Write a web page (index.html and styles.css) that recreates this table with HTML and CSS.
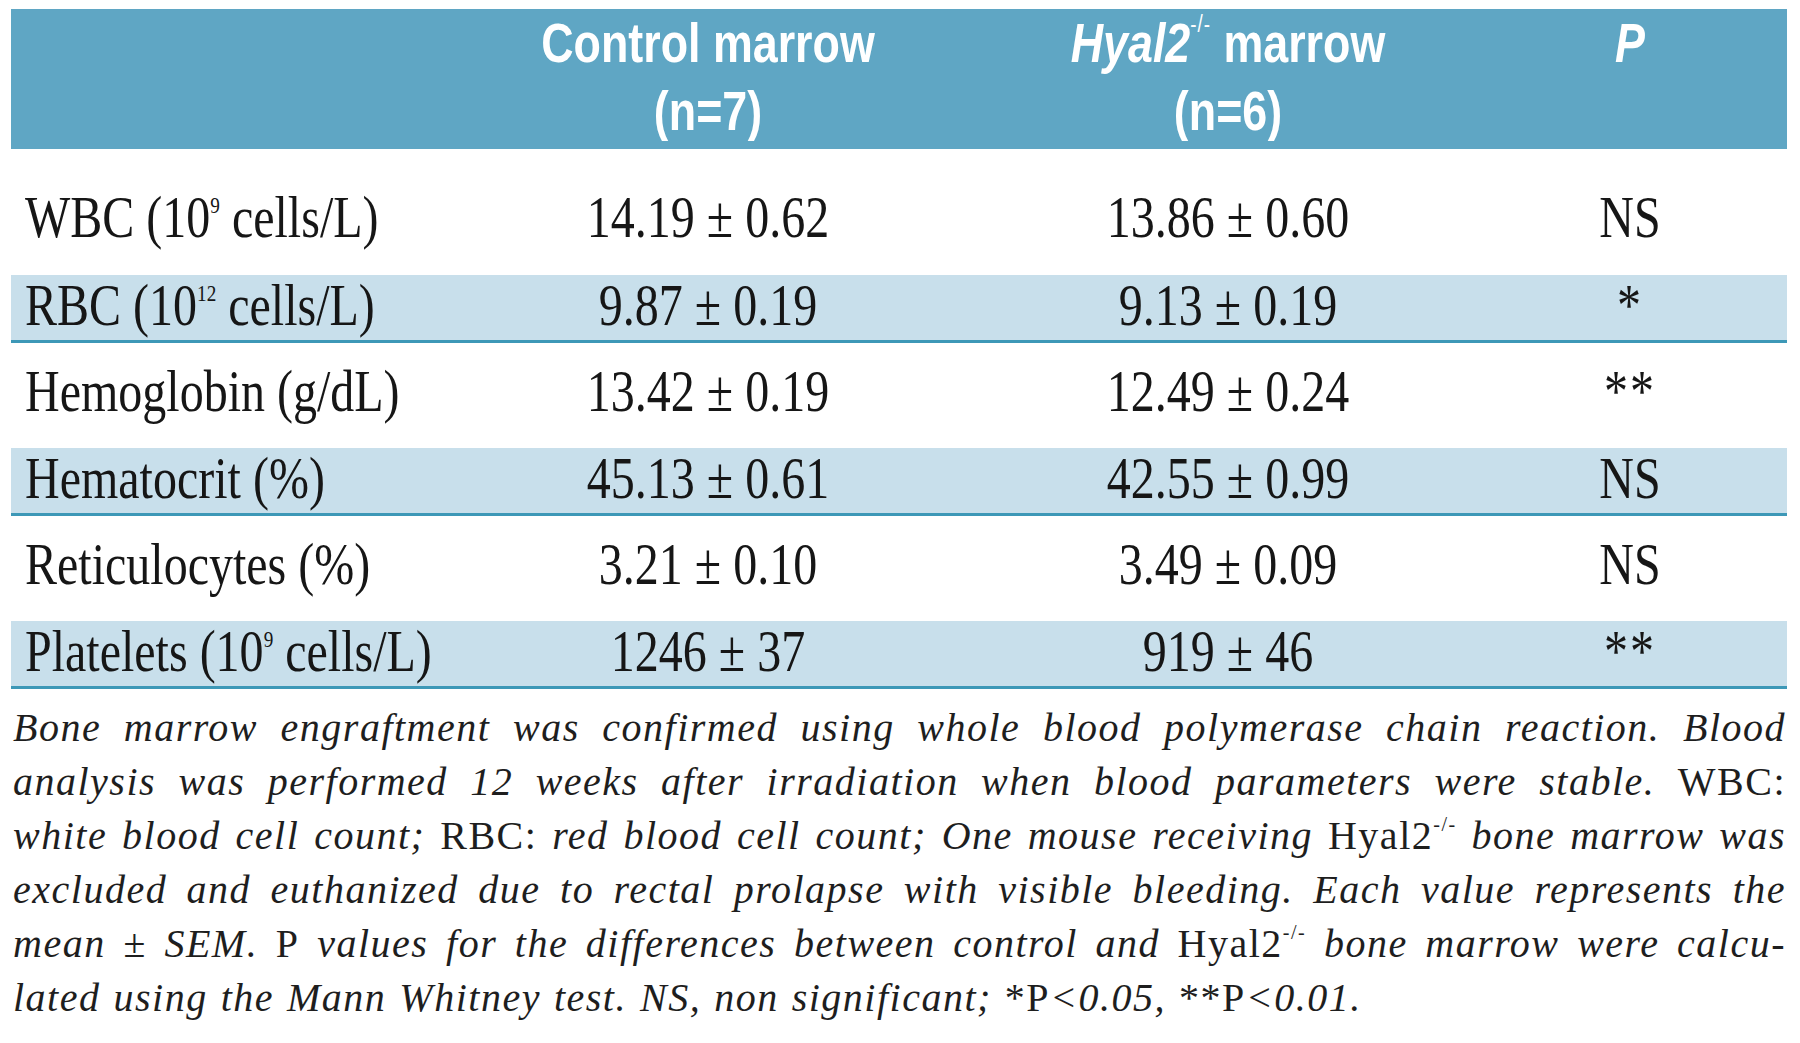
FILE: index.html
```html
<!DOCTYPE html>
<html lang="en">
<head>
<meta charset="utf-8">
<title>Hematological parameters</title>
<link rel="stylesheet" href="styles.css">
</head>
<body>
<table class="data">
  <colgroup>
    <col class="c-label"><col class="c-val"><col class="c-val"><col class="c-p">
  </colgroup>
  <thead>
    <tr class="hdr">
      <th class="label"></th>
      <th><span class="t">Control marrow<br>(n=7)</span></th>
      <th><span class="t"><i>Hyal2</i><span class="hsup">-/-</span> marrow<br>(n=6)</span></th>
      <th class="pcol"><span class="t"><i>P</i></span></th>
    </tr>
  </thead>
  <tbody>
    <tr class="first">
      <td class="label"><span class="t">WBC (10<span class="sup">9</span> cells/L)</span></td>
      <td><span class="t">14.19 ± 0.62</span></td>
      <td><span class="t">13.86 ± 0.60</span></td>
      <td class="pcol"><span class="t">NS</span></td>
    </tr>
    <tr class="band">
      <td class="label"><span class="t">RBC (10<span class="sup">12</span> cells/L)</span></td>
      <td><span class="t">9.87 ± 0.19</span></td>
      <td><span class="t">9.13 ± 0.19</span></td>
      <td class="pcol star"><span class="t">*</span></td>
    </tr>
    <tr class="plain">
      <td class="label"><span class="t">Hemoglobin (g/dL)</span></td>
      <td><span class="t">13.42 ± 0.19</span></td>
      <td><span class="t">12.49 ± 0.24</span></td>
      <td class="pcol star"><span class="t">**</span></td>
    </tr>
    <tr class="band">
      <td class="label"><span class="t">Hematocrit (%)</span></td>
      <td><span class="t">45.13 ± 0.61</span></td>
      <td><span class="t">42.55 ± 0.99</span></td>
      <td class="pcol"><span class="t">NS</span></td>
    </tr>
    <tr class="plain">
      <td class="label"><span class="t">Reticulocytes (%)</span></td>
      <td><span class="t">3.21 ± 0.10</span></td>
      <td><span class="t">3.49 ± 0.09</span></td>
      <td class="pcol"><span class="t">NS</span></td>
    </tr>
    <tr class="band">
      <td class="label"><span class="t">Platelets (10<span class="sup">9</span> cells/L)</span></td>
      <td><span class="t">1246 ± 37</span></td>
      <td><span class="t">919 ± 46</span></td>
      <td class="pcol star"><span class="t">**</span></td>
    </tr>
  </tbody>
</table>
<div class="note">
  <div class="ln">Bone marrow engraftment was confirmed using whole blood polymerase chain reaction. Blood</div>
  <div class="ln">analysis was performed 12 weeks after irradiation when blood parameters were stable. <span class="rm">WBC:</span></div>
  <div class="ln">white blood cell count; <span class="rm">RBC:</span> red blood cell count; One mouse receiving <span class="rm">Hyal2<span class="nsup">-/-</span></span> bone marrow was</div>
  <div class="ln">excluded and euthanized due to rectal prolapse with visible bleeding. Each value represents the</div>
  <div class="ln">mean ± SEM. <span class="rm">P</span> values for the differences between control and <span class="rm">Hyal2<span class="nsup">-/-</span></span> bone marrow were calcu-</div>
  <div class="ln last">lated using the Mann Whitney test. NS, non significant; <span class="rm">*P</span>&lt;0.05, <span class="rm">**P</span>&lt;0.01.</div>
</div>
</body>
</html>
```

FILE: styles.css
```css
html {
  background: #ffffff;
}

body {
  margin: 0;
  padding-top: 9px;
  background: #ffffff;
  color: #161616;
}

.data {
  width: 1776px;
  margin-left: 11px;
  border-collapse: collapse;
  border-spacing: 0;
  table-layout: fixed;
  font-family: "Liberation Serif", "Times New Roman", serif;
  font-size: 48px;
  line-height: 56px;
}

.c-label { width: 437px; }
.c-val { width: 520px; }
.c-p { width: 299px; }

.data th,
.data td {
  padding: 0;
  text-align: center;
  white-space: nowrap;
}

.data .label {
  text-align: left;
  padding-left: 14px;
}

.data .pcol {
  padding-right: 15px;
}

/* condensed type: glyphs drawn tall and narrow */
.t {
  display: inline-block;
  transform: scaleY(1.25);
  transform-origin: 50% 50%;
}

/* header */
.hdr {
  height: 140px;
}

.hdr th {
  vertical-align: top;
  padding-top: 13px;
  background: #5fa6c4;
  color: #ffffff;
  font-family: "Liberation Sans", Arial, sans-serif;
  font-weight: 700;
  font-size: 44.8px;
  line-height: 54.4px;
}

.hdr th.pcol {
  padding-top: 6px;
}

.hdr th i {
  font-style: italic;
}

.hsup {
  font-size: 0.42em;
  font-weight: 400;
  line-height: 0;
  vertical-align: 1.3em;
  letter-spacing: 1px;
}

/* body rows */
.first td {
  padding-top: 40px;
  padding-bottom: 30px;
}

.band td {
  background: #c8dfeb;
  padding-top: 2px;
  padding-bottom: 7px;
  border-bottom: 3px solid #3d98b7;
}

.plain td {
  padding-top: 20px;
  padding-bottom: 29px;
}

.sup {
  font-size: 0.4em;
  line-height: 0;
  vertical-align: 1em;
}

.star {
  letter-spacing: 2px;
}

/* footnote */
.note {
  padding: 12px 14px 0 13px;
  font-family: "Liberation Serif", "Times New Roman", serif;
  font-style: italic;
  font-size: 40px;
  line-height: 54px;
  letter-spacing: 1.5px;
  color: #1e1e1e;
}

.ln {
  text-align: justify;
  text-align-last: justify;
}

.ln.last {
  text-align: left;
  text-align-last: left;
  word-spacing: 1.5px;
}

.rm {
  font-style: normal;
}

.nsup {
  font-size: 0.5em;
  line-height: 0;
  vertical-align: 0.9em;
}
```
